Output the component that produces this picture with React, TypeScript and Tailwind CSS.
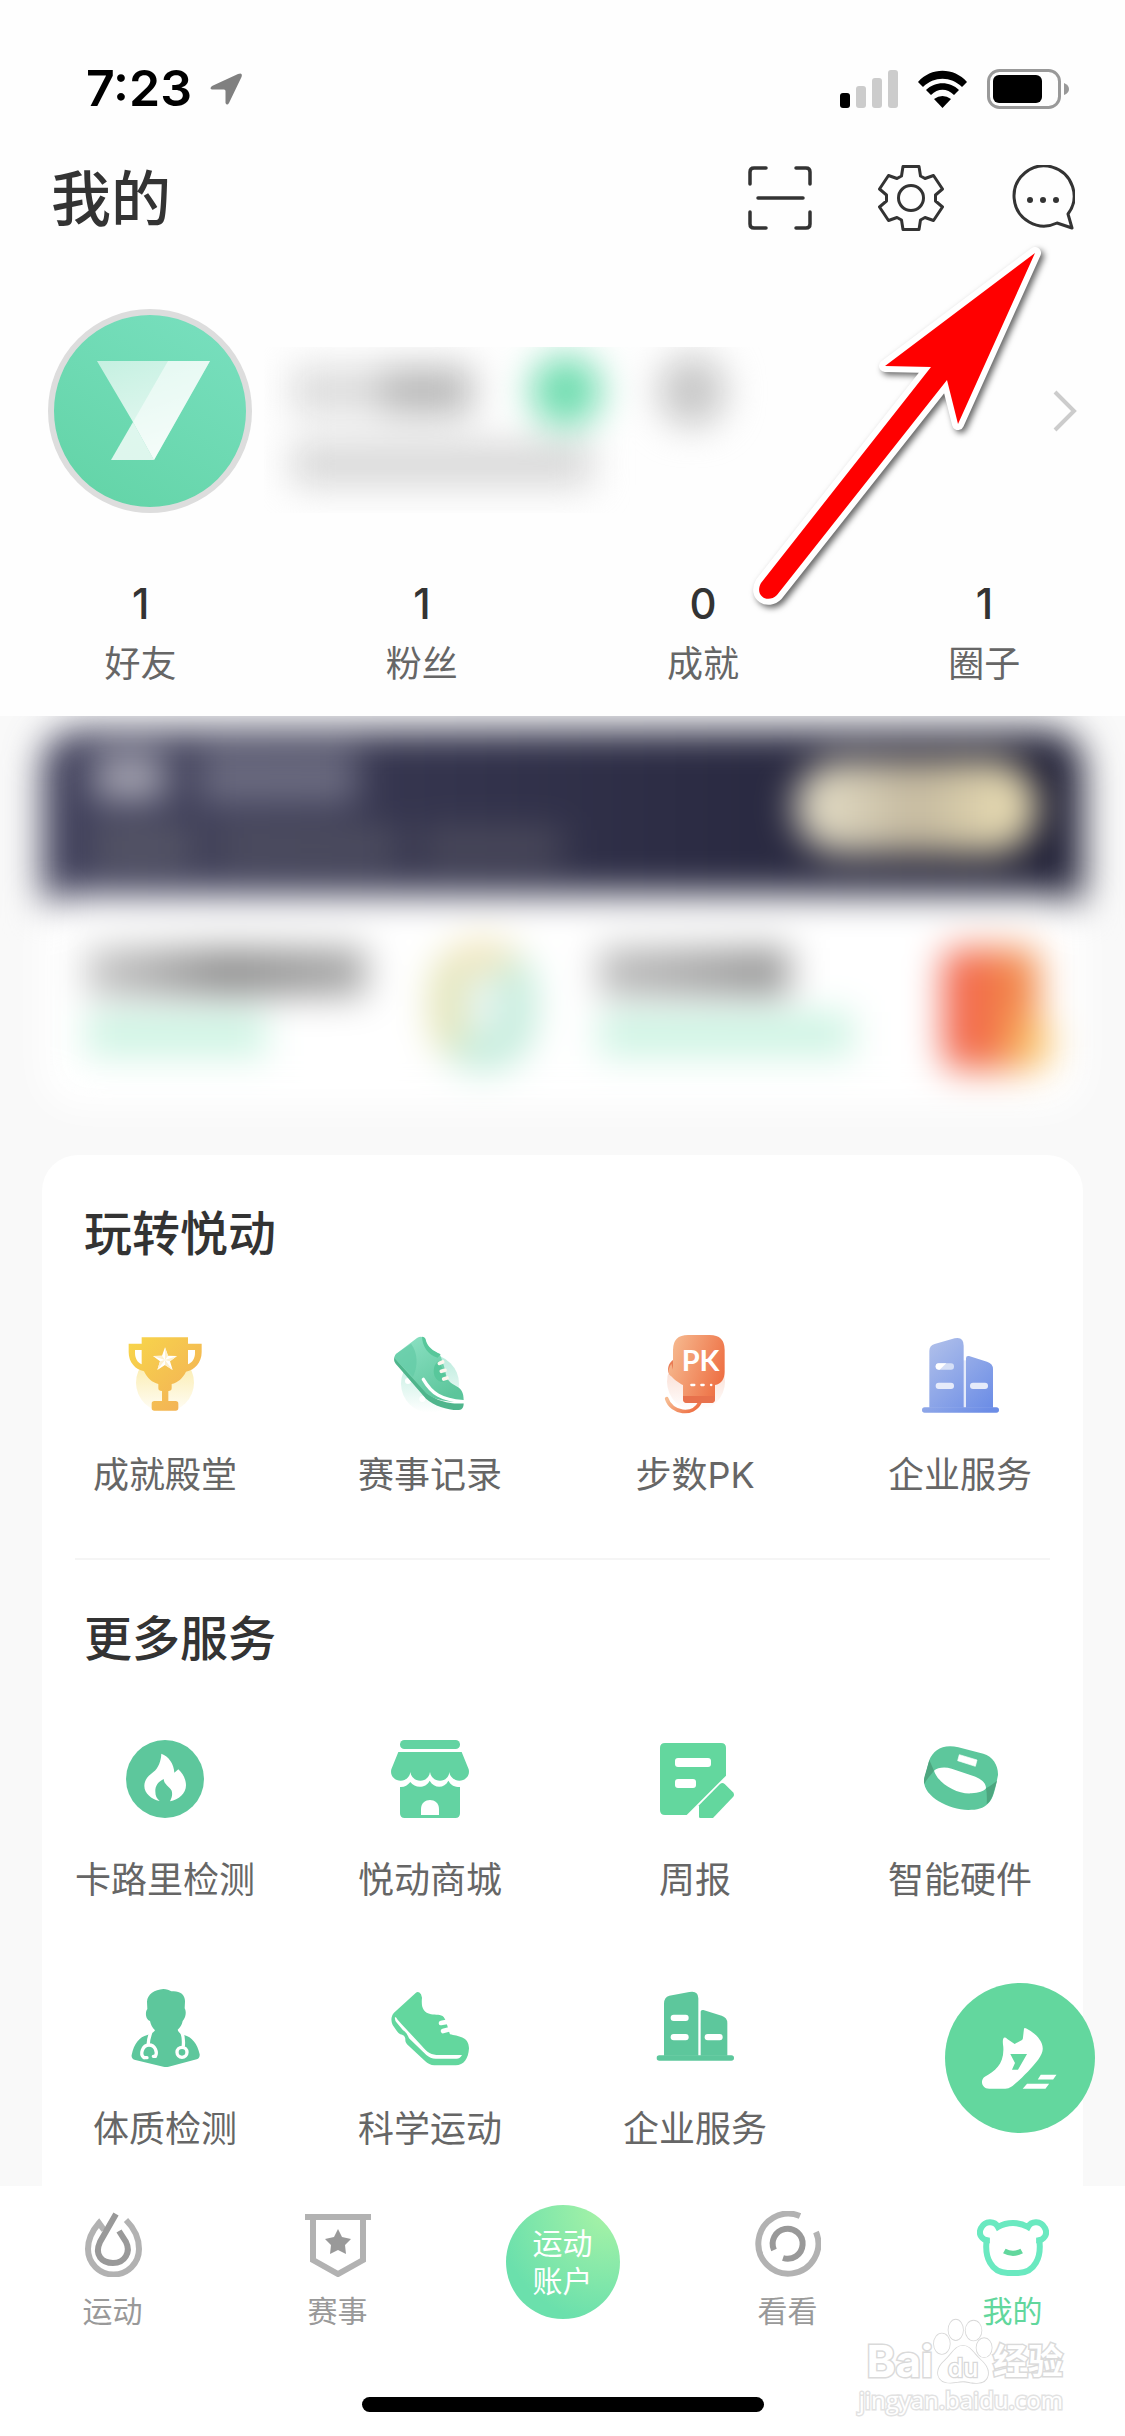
import type { ReactNode } from "react";

type Item = { label: string; icon: ReactNode };

const TrophyIcon = () => (
  <svg viewBox="0 0 234 234" className="size-[78px]">
    <defs>
      <linearGradient id="gold" x1="0" y1="0" x2="1" y2="1">
        <stop offset="0" stopColor="#f8d64a" />
        <stop offset="1" stopColor="#f2ad58" />
      </linearGradient>
      <linearGradient id="goldGlow" x1="0" y1="0" x2="0" y2="1">
        <stop offset="0" stopColor="#fae9a0" />
        <stop offset="1" stopColor="#fffdf6" />
      </linearGradient>
    </defs>
    <circle cx="117" cy="143" r="87" fill="url(#goldGlow)" />
    <path d="M17 36 H47 V98 C30 92 17 72 17 55 Z M217 36 H187 V98 C204 92 217 72 217 55 Z" fill="#fff" />
    <path
      fill="url(#gold)"
      fillRule="evenodd"
      d="M47 7 H186 V26 H227 V52 C227 82 206 106 180 110 C170 130 155 143 137 147 V160 Q137 168 127 168 V198 H149 Q157 198 157 206 V219 Q157 227 149 227 H85 Q77 227 77 219 V206 Q77 198 85 198 H108 V168 Q97 168 97 160 V147 C79 143 64 130 54 109 C28 104 8 82 8 52 V26 H47 Z M27 45 V54 C27 70 35 83 47 88 V45 Z M207 45 H186 V88 C199 83 207 70 207 54 Z"
    />
    <path d="M117 37 L126 62 L153 63 L132 79 L140 105 L117 90 L94 105 L102 79 L81 63 L108 62 Z" fill="#fff" />
    <path d="M117 75 L117 37 L126 62 Z M117 75 L153 63 L132 79 Z M117 75 L140 105 L117 90 Z M117 75 L94 105 L102 79 Z M117 75 L81 63 L108 62 Z" fill="#fdf0cf" />
  </svg>
);

const RunShoeIcon = () => (
  <svg viewBox="0 0 234 234" className="size-[78px]">
    <defs>
      <linearGradient id="mint" x1="0" y1="0" x2="0.7" y2="1">
        <stop offset="0" stopColor="#8fe3c6" />
        <stop offset="1" stopColor="#5cc59b" />
      </linearGradient>
      <linearGradient id="mintGlow" x1="0" y1="0" x2="0" y2="1">
        <stop offset="0" stopColor="#b9ebdc" />
        <stop offset="1" stopColor="#ffffff" />
      </linearGradient>
    </defs>
    <circle cx="117" cy="146" r="87" fill="url(#mintGlow)" />
    <circle cx="51" cy="138" r="9" fill="#fff" />
    <circle cx="94" cy="192" r="9" fill="#fff" />
    <path d="M12 64 L107 174 C140 200 180 208 218 205 C218 217 214 225 204 225 C170 226 130 213 105 191 L14 86 C8 79 8 71 12 64 Z" fill="#4fb58c" />
    <path d="M78 9 Q92 1 103 11 C106 36 124 48 146 57 C152 72 158 88 163 108 C166 130 172 140 190 150 C212 161 218 172 218 196 C190 204 135 200 105 174 L13 72 Q8 63 16 56 Z" fill="url(#mint)" />
    <path d="M60 26 C80 52 82 90 66 126 L13 72 Q8 63 16 56 Z" fill="#63caa5" opacity="0.7" />
    <path d="M93 5 Q102 5 104 14 C110 38 126 46 149 58 L140 68 C112 60 94 34 93 5 Z" fill="#58c79b" />
    <path d="M144 78 C122 88 122 134 150 140 C162 142 168 136 168 132 Z" fill="#58c79b" />
    <path d="M97 133 C122 176 150 194 217 200" fill="none" stroke="#fff" strokeWidth="10" strokeLinecap="round" />
    <path d="M145 85 L155 81 M151 109 L162 106 M158 132 L168 129" stroke="#fdf6ee" strokeWidth="11" strokeLinecap="round" />
  </svg>
);

const GloveIcon = () => (
  <svg viewBox="0 0 234 234" className="size-[78px] overflow-visible">
    <defs>
      <linearGradient id="coral" x1="0" y1="0.2" x2="1" y2="0.6">
        <stop offset="0" stopColor="#f6ba90" />
        <stop offset="1" stopColor="#ee6f43" />
      </linearGradient>
      <linearGradient id="coralGlow" x1="0" y1="0" x2="0" y2="1">
        <stop offset="0.3" stopColor="#fadfd5" />
        <stop offset="1" stopColor="#ffffff" />
      </linearGradient>
    </defs>
    <circle cx="120" cy="140" r="87" fill="url(#coralGlow)" />
    <path d="M32 191 C46 236 112 244 132 202" fill="none" stroke="url(#coral)" strokeWidth="11" strokeLinecap="round" />
    <path d="M55 72 C34 84 32 108 42 120 L60 130 Z" fill="#ea7c55" />
    <path d="M96 0 H161 Q206 0 206 45 V110 C206 132 196 146 177 150 V192 Q177 204 165 204 H93 Q81 204 81 192 V150 C68 145 50 130 40 118 C36 110 38 98 46 86 L51 104 V45 Q51 0 96 0 Z" fill="url(#coral)" />
    <path d="M81 183 H177 V192 Q177 204 165 204 H93 Q81 204 81 192 Z" fill="#e8714c" />
    <path d="M106 150 H115 M136 150 H143 M165 150 H166" stroke="#fff" strokeWidth="7" strokeLinecap="round" />
    <text x="77" y="108" fill="#fff" fontSize="87" className="font-['Lato',sans-serif] font-bold">PK</text>
  </svg>
);

const OfficeBlueIcon = () => (
  <svg viewBox="0 0 234 234" className="size-[78px]">
    <defs>
      <linearGradient id="sky" gradientUnits="userSpaceOnUse" x1="20" y1="20" x2="210" y2="220">
        <stop offset="0" stopColor="#b0c0ea" />
        <stop offset="1" stopColor="#6c8de6" />
      </linearGradient>
    </defs>
    <rect x="126" y="76" width="11" height="142" fill="#e3e9f9" />
    <path d="M25 218 V48 Q25 32 41 27 L101 10 Q128 4 128 32 V218 Z M135 218 V70 Q135 61 144 63 L198 80 Q216 86 216 102 V218 Z" fill="url(#sky)" />
    <rect x="3" y="217" width="231" height="16" rx="8" fill="url(#sky)" />
    <rect x="44" y="85" width="55" height="19" rx="9" fill="#d5dff6" />
    <path d="M53 85 H76 L56 104 H53 Q44 104 44 94 Q44 85 53 85 Z" fill="#fff" />
    <rect x="44" y="143" width="55" height="19" rx="9" fill="#e6ebfa" />
    <rect x="147" y="143" width="54" height="19" rx="9" fill="#e6ebfa" />
  </svg>
);

const FlameIcon = () => (
  <svg viewBox="0 0 234 234" className="size-[78px]">
    <circle cx="117" cy="117" r="117" fill="#5dc79c" />
    <path d="M106 41 C128 48 144 72 145 98 L157 88 C172 102 180 120 180 136 C180 160 158 180 132 184 C138 172 140 164 137 152 C131 140 114 134 113 117 C95 126 88 138 88 154 C88 168 92 176 101 183 C76 178 55 160 55 138 C55 120 66 108 82 96 C98 84 105 62 106 41 Z" fill="#fff" />
  </svg>
);

const ShopIcon = () => (
  <svg viewBox="0 0 234 234" className="size-[78px]" fill="#63d3a2">
    <rect x="27" y="0" width="180" height="27" rx="13" />
    <path d="M22 36 H212 L233 88 C238 108 222 122 205 122 C190 122 176 110 175 96 C174 112 162 122 147 122 C132 122 119 112 117 96 C115 112 103 122 88 122 C73 122 60 112 58 96 C57 110 45 122 29 122 C12 122 -4 108 1 88 Z" />
    <path d="M27 141 C40 142 50 136 58 126 C72 146 104 146 116 122 C130 146 160 146 172 122 C180 136 190 141 207 141 V220 Q207 234 193 234 H41 Q27 234 27 220 Z" />
    <path d="M90 225 V207 C90 171 144 171 144 207 V225 Z" fill="#fff" />
  </svg>
);

const ReportIcon = () => (
  <svg viewBox="0 0 234 234" className="size-[78px]" fill="#63d79e">
    <path d="M27 9 H195 Q210 9 210 24 V107 L92 225 H27 Q12 225 12 210 V24 Q12 9 27 9 Z" />
    <path d="M192 132 Q199 126 206 132 L231 157 Q237 164 231 171 L171 234 H133 Q129 234 129 230 V196 Z" />
    <rect x="57" y="54" width="108" height="27" rx="9" fill="#fff" />
    <rect x="57" y="117" width="63" height="27" rx="9" fill="#fff" />
  </svg>
);

const BandIcon = () => (
  <svg viewBox="0 0 234 234" className="size-[78px]">
    <path
      fill="#5dc79c"
      fillRule="evenodd"
      d="M112 22 L187 41 C216 50 232 76 231 105 L227 125 C222 150 216 176 202 190 C188 206 168 210 142 210 C82 208 8 170 9 122 L25 60 C36 32 66 10 112 22 Z M39 92 C52 132 110 164 152 160 C172 159 190 154 195 145 C196 128 176 114 157 108 L92 86 C72 80 50 82 39 92 Z"
    />
    <path d="M25 60 L39 92 C30 104 18 116 10 132 C8 124 9 118 10 112 Z M228 122 C220 128 208 138 195 145 C198 160 198 176 197 193 C208 184 214 172 218 156 Z" fill="#4da67f" />
    <path d="M115 44 L168 60 L163 79 L110 62 Z" fill="#fff" stroke="#fff" strokeWidth="2" strokeLinejoin="round" />
  </svg>
);

const DoctorIcon = () => (
  <svg viewBox="0 0 234 234" className="size-[78px]">
    <path
      fill="#5dc79c"
      d="M112 0 C122 0 130 3 136 7 C160 4 178 16 177 38 L176 58 C181 66 181 84 170 96 C168 108 162 116 155 122 C158 130 162 134 174 138 C198 144 214 164 221 196 Q222 208 212 211 L128 233 Q120 235 112 233 L28 213 Q15 209 17 198 C24 164 40 144 64 138 C76 134 84 130 87 124 C79 116 74 106 72 96 C58 92 57 68 64 60 L63 38 C64 16 86 2 112 0 Z"
    />
    <g fill="none" stroke="#fff" strokeWidth="10" strokeLinecap="round">
      <path d="M76 124 C72 140 66 150 67 166 M166 128 C174 142 173 156 172 170" />
      <path d="M54 206 C40 196 50 168 69 168 C88 168 95 190 88 202 L82 202 M54 206 L63 206" />
      <circle cx="168" cy="190" r="15" />
    </g>
  </svg>
);

const SneakerIcon = () => (
  <svg viewBox="0 0 234 234" className="size-[78px]">
    <path
      fill="#63d79e"
      d="M74 12 Q82 4 90 16 L93 26 C90 54 96 70 120 76 C134 78 150 76 158 84 C166 94 170 116 177 136 C200 142 234 142 234 178 C232 210 218 229 194 229 H130 Q114 228 102 216 L48 166 Q42 160 43 150 C42 140 36 138 28 136 Q22 132 18 127 L5 108 C-1 96 0 80 9 71 Z"
    />
    <path d="M12 84 Q16 84 20 92 L34 108 L92 170 C108 190 122 198 144 198 H213 Q208 209 196 209 H134 Q118 209 106 198 L54 148 C50 138 46 130 36 124 L18 102 Q10 94 12 84 Z" fill="#fff" />
    <path d="M150 102 L172 98 M156 126 L176 121" stroke="#fff" strokeWidth="14" strokeLinecap="round" />
  </svg>
);

const OfficeGreenIcon = () => (
  <svg viewBox="0 0 234 234" className="size-[78px]" fill="#5dc79c">
    <path d="M24 200 V44 Q24 24 40 20 L100 9 Q127 4 127 28 V200 Z" />
    <path d="M134 200 V68 Q134 62 142 63 L197 80 Q214 86 214 102 V200 Z" />
    <rect x="2" y="199" width="232" height="16" rx="8" />
    <g fill="#fff">
      <rect x="44" y="77" width="54" height="19" rx="9" />
      <rect x="44" y="135" width="54" height="19" rx="9" />
      <rect x="146" y="135" width="54" height="19" rx="9" />
    </g>
  </svg>
);

const stats = [
  { value: 1, label: "好友" },
  { value: 1, label: "粉丝" },
  { value: 0, label: "成就" },
  { value: 1, label: "圈子" },
];

const playItems: Item[] = [
  { label: "成就殿堂", icon: <TrophyIcon /> },
  { label: "赛事记录", icon: <RunShoeIcon /> },
  { label: "步数PK", icon: <GloveIcon /> },
  { label: "企业服务", icon: <OfficeBlueIcon /> },
];

const moreItems: Item[] = [
  { label: "卡路里检测", icon: <FlameIcon /> },
  { label: "悦动商城", icon: <ShopIcon /> },
  { label: "周报", icon: <ReportIcon /> },
  { label: "智能硬件", icon: <BandIcon /> },
  { label: "体质检测", icon: <DoctorIcon /> },
  { label: "科学运动", icon: <SneakerIcon /> },
  { label: "企业服务", icon: <OfficeGreenIcon /> },
];

function StatusBar() {
  return (
    <div className="flex items-center justify-between pt-[63px] pr-[56px] pl-[86px]">
      <div className="flex items-center gap-[18px]">
        <span className="text-[50px] leading-[51px] font-semibold text-black">7:23</span>
        <svg viewBox="0 0 32 32" className="size-8" fill="#808080">
          <path d="M28 1 Q33 -1 31.500 4 L19 30 Q17 33 15.500 30 V18 Q15.500 16.500 14 16.500 H2 Q-1 15.500 2 13 Z" />
        </svg>
      </div>
      <div className="flex items-center gap-[19px]">
        <svg viewBox="0 0 58 38" className="h-[38px] w-[58px]">
          <rect x="0" y="23" width="10" height="15" rx="3" />
          <rect x="16" y="16" width="10" height="22" rx="3" fill="#ccc" />
          <rect x="32" y="8" width="10" height="30" rx="3" fill="#ccc" />
          <rect x="48" y="0" width="10" height="38" rx="3" fill="#ccc" />
        </svg>
        <svg viewBox="0 0 51 38" className="h-[38px] w-[51px]">
          <path d="M1 12 C14 -3 37 -3 50 12 L45 17 C34 6 17 6 6 17 Z" />
          <path d="M9 20 C18 11 33 11 42 20 L37 25 C30 18 21 18 14 25 Z" />
          <path d="M17 29 Q25.500 23 34 29 L25.500 38 Z" />
        </svg>
        <svg viewBox="0 0 82 40" className="h-10 w-[82px]">
          <rect x="1.500" y="1.500" width="71" height="37" rx="11" fill="none" stroke="#999" strokeWidth="3" />
          <rect x="6" y="6" width="49" height="28" rx="6" />
          <path d="M77 14 Q82 16 82 20 Q82 24 77 26 Z" fill="#999" />
        </svg>
      </div>
    </div>
  );
}

function Header() {
  return (
    <header className="mt-[51px] flex items-center justify-between pr-[50px] pl-[51px]">
      <h1 className="pt-0.5 text-[60px] leading-[64px] font-medium text-[#333]">我的</h1>
      <div className="flex gap-[65px]">
        <button aria-label="扫一扫">
          <svg viewBox="0 0 66 66" className="size-[66px]" fill="none" stroke="#333" strokeWidth="3.500" strokeLinecap="round">
            <path d="M3 19 V7 Q3 3 7 3 H19 M49 3 H59 Q63 3 63 7 V19 M63 47 V59 Q63 63 59 63 H49 M19 63 H7 Q3 63 3 59 V47" />
            <path d="M11 33 H56" />
          </svg>
        </button>
        <button aria-label="设置">
          <svg viewBox="-33 -33 66 66" className="size-[66px]" fill="none" stroke="#333" strokeWidth="3" strokeLinejoin="round">
            <path d="M-9.500 -22 L-8 -31.500 H8 L9.500 -22 L14 -19.500 L22.500 -22.500 L31.500 -9 L24.500 -3 V3 L31.500 9 L22.500 22.500 L14 19.500 L9.500 22 L8 31.500 H-8 L-9.500 22 L-14 19.500 L-22.500 22.500 L-31.500 9 L-24.500 3 V-3 L-31.500 -9 L-22.500 -22.500 L-14 -19.500 Z" />
            <circle r="12.500" />
          </svg>
        </button>
        <button aria-label="消息">
          <svg viewBox="0 0 66 66" className="size-[66px]" fill="none" stroke="#333" strokeWidth="3" strokeLinejoin="round">
            <path d="M48 58 A30 30 0 1 1 59 49 L63 63 Z" />
            <g fill="#333" stroke="none">
              <circle cx="21" cy="35" r="3" />
              <circle cx="34" cy="35" r="3" />
              <circle cx="47" cy="35" r="3" />
            </g>
          </svg>
        </button>
      </div>
    </header>
  );
}

function Profile() {
  return (
    <section className="mt-[78px] flex h-[204px] items-center px-[48px]">
      <svg viewBox="0 0 204 204" className="size-[204px] shrink-0">
        <defs>
          <linearGradient id="avatar" x1="0.2" y1="1" x2="0.8" y2="0">
            <stop offset="0" stopColor="#63d4a7" />
            <stop offset="1" stopColor="#78dfbe" />
          </linearGradient>
          <linearGradient id="fold" x1="0" y1="0" x2="0.3" y2="1">
            <stop offset="0" stopColor="#fff" stopOpacity="0.6" />
            <stop offset="1" stopColor="#fff" stopOpacity="0.85" />
          </linearGradient>
        </defs>
        <circle cx="102" cy="102" r="99" fill="url(#avatar)" stroke="#ddd" strokeWidth="6" />
        <path d="M49 52 H162 L106 151 L85 113 Z" fill="url(#fold)" />
        <path d="M120 52 H162 L106 151 L85 113 Z" fill="#fff" opacity="0.5" />
        <path d="M85 113 L106 151 H63 Z" fill="#fff" opacity="0.78" />
      </svg>
      <div className="ml-3 h-[166px] flex-1 self-end overflow-hidden">
        <div className="px-7 pt-[8px] blur-[18px]">
          <div className="flex items-center">
            <div className="h-12 w-[90px] bg-[#dcdcdc]" />
            <div className="h-12 w-[90px] bg-[#b8b8b8]" />
            <div className="ml-[58px] h-[72px] w-[72px] rounded-full bg-[#70ddb0]" />
            <div className="ml-[56px] h-[72px] w-[68px] rounded-full bg-[#c8c8c8]" />
          </div>
          <div className="mt-[16px] h-[42px] w-[300px] bg-[#d6d6d6]" />
        </div>
      </div>
      <svg viewBox="0 0 24 42" className="h-[42px] w-6" fill="none" stroke="#ccc" strokeWidth="4">
        <path d="M2 2 L21 21 L2 40" />
      </svg>
    </section>
  );
}

function Stats() {
  return (
    <dl className="mt-[70px] grid grid-cols-4 pb-[34px] text-center">
      {stats.map((s) => (
        <div key={s.label} className="flex flex-col-reverse gap-[21px]">
          <dt className="text-[36px] leading-[36px] text-[#666]">{s.label}</dt>
          <dd className="text-[42px] leading-[42px] font-medium text-[#333]">{s.value}</dd>
        </div>
      ))}
    </dl>
  );
}

// Membership banner and wallet cards, kept blurred for privacy
function BlurredCards() {
  return (
    <section aria-hidden="true" className="h-[439px] overflow-hidden">
      <div className="px-[42px] pt-[14px] blur-[18px]">
        <div className="flex h-[170px] items-center justify-between rounded-t-[36px] bg-linear-to-r from-[#41415c] to-[#202036] pr-[46px] pb-4 pl-[52px]">
          <div>
            <div className="flex items-center gap-8">
              <div className="h-12 w-[72px] bg-[#a3a2b0]" />
              <div className="h-14 w-[160px] bg-[#6b6b80]" />
            </div>
            <div className="mt-6 flex gap-6">
              <div className="h-9 w-[100px] bg-[#5a5a69]" />
              <div className="h-9 w-[180px] bg-[#515162]" />
              <div className="h-9 w-[140px] bg-[#4c4b5c]" />
            </div>
          </div>
          <div className="h-[94px] w-[242px] rounded-full bg-linear-to-r from-[#e8e2cc] via-[#c4b99f] to-[#f0e3b6]" />
        </div>
        <div className="-mt-[6px] grid h-[214px] grid-cols-2 rounded-[36px] bg-white px-[44px] pt-[54px]">
          <div className="flex justify-between pr-[28px]">
            <div>
              <div className="h-12 w-[280px] bg-linear-to-r from-[#cacaca] via-[#8d8d8d] to-[#a8a8a8]" />
              <div className="mt-4 h-11 w-[180px] bg-[#cdf4e3]" />
            </div>
            <div className="-mt-2 h-[130px] w-[104px] rounded-[50px] border-[30px] border-[#bfebd9] border-t-[#f0e4b8] border-l-[#e2e2b0] bg-[#e6f5f0]" />
          </div>
          <div className="flex justify-between pl-[36px]">
            <div>
              <div className="h-12 w-[190px] bg-linear-to-r from-[#bdbdbd] to-[#929292]" />
              <div className="mt-4 h-11 w-[254px] bg-[#cdf4e3]" />
            </div>
            <div className="flex h-[122px] w-[96px] items-end justify-end rounded-2xl bg-linear-to-r from-[#f25a4c] to-[#f19348]">
              <div className="h-[52px] w-[40px] translate-x-3 rounded-full bg-[#f9c268]" />
            </div>
          </div>
        </div>
      </div>
    </section>
  );
}

function ServiceGroup({ title, items }: { title: string; items: Item[] }) {
  return (
    <section className="pt-[55px] pb-[65px]">
      <h2 className="px-[42px] text-[48px] leading-[48px] font-medium text-[#333]">{title}</h2>
      <div className="mt-[77px] grid grid-cols-4 gap-x-[75px] gap-y-[91px] px-7">
        {items.map((item) => (
          <button key={item.label} className="flex flex-col items-center gap-[44px]">
            {item.icon}
            <span className="text-[36px] leading-[36px] whitespace-nowrap text-[#666]">{item.label}</span>
          </button>
        ))}
      </div>
    </section>
  );
}

function TabBar() {
  return (
    <nav className="grid h-[211px] grid-cols-5 bg-white pt-[25px] text-center text-[30px] leading-[30px] text-[#999]">
      <a href="#" className="flex flex-col items-center gap-[19px]">
        <svg viewBox="0 0 66 66" className="size-[66px]" fill="none" strokeWidth="6">
          <path d="M24 19 L19 12 C12 20 8 29 8 38 A25 25 0 0 0 59 38 C59 28 54 17 46 9" stroke="#b2b2b2" />
          <path d="M36 3 L20 31 C14 44 22 52 33 52 C45 52 51 41 46 31 L39 20" stroke="#999" />
        </svg>
        运动
      </a>
      <a href="#" className="flex flex-col items-center gap-[19px]">
        <svg viewBox="0 0 66 66" className="size-[66px]" fill="none" strokeWidth="6" stroke="#b2b2b2">
          <path d="M0 6 H66 M8 6 V49 L33 63 L58 49 V6" />
          <path d="M33 18 L37 26 L46 28 L40 34 L41 43 L33 39 L25 43 L26 34 L20 28 L29 26 Z" fill="#999" stroke="none" />
        </svg>
        赛事
      </a>
      <a href="#" className="-mt-1.5 flex size-[114px] flex-col items-center justify-center justify-self-center rounded-full bg-[radial-gradient(circle_at_90%_5%,#a8f3a6,#6be0ac_75%)] text-[30px] leading-[38px] text-white">
        <span>运动</span>
        <span>账户</span>
      </a>
      <a href="#" className="flex flex-col items-center gap-[19px]">
        <svg viewBox="0 0 66 66" className="size-[66px]" fill="none" strokeWidth="6">
          <path d="M45 5 A30 30 0 1 0 61 21" stroke="#b2b2b2" />
          <path d="M19 39 A15 15 0 1 1 28 47" stroke="#999" />
        </svg>
        看看
      </a>
      <a href="#" className="flex flex-col items-center gap-[19px] text-[#62d79d]">
        <svg viewBox="0 0 216 198" className="h-[66px] w-[72px]" fill="none" strokeWidth="18">
          <path d="M38 88 C14 90 2 68 13 50 C24 30 52 28 63 48 C90 32 126 32 153 48 C164 28 192 30 203 50 C214 68 202 90 178 88" stroke="#6ae9c0" />
          <path d="M30 80 C20 140 44 186 92 186 H124 C172 186 196 140 186 80" stroke="#6ae9c0" />
          <path d="M82 120 Q108 134 134 120" stroke="#62d79d" strokeWidth="16" />
        </svg>
        我的
      </a>
    </nav>
  );
}

function Watermark() {
  return (
    <div className="pointer-events-none absolute right-[62px] bottom-[20px] flex flex-col items-end text-white">
      <div className="flex items-end font-bold [-webkit-text-stroke:3px_#dadada] [paint-order:stroke_fill]">
        <span className="text-[44px] leading-[46px]">Bai</span>
        <svg viewBox="0 0 180 200" className="h-[66px] w-[60px]" fill="#fff" stroke="#d8d8d8" strokeWidth="5">
          <ellipse cx="26" cy="78" rx="24" ry="31" />
          <ellipse cx="68" cy="36" rx="22" ry="31" />
          <ellipse cx="122" cy="38" rx="24" ry="30" />
          <ellipse cx="154" cy="90" rx="23" ry="29" />
          <path d="M90 84 C112 84 122 108 142 126 C180 158 170 198 130 197 C112 197 104 192 90 192 C76 192 68 196 52 196 C10 196 2 158 34 130 C58 108 66 84 90 84 Z" />
          <text x="90" y="178" textAnchor="middle" fontSize="76" strokeWidth="8" className="font-medium">du</text>
        </svg>
        <span className="text-[35px] leading-[46px]">经验</span>
      </div>
      <span className="text-[24px] leading-[32px] font-['Open_Sans',sans-serif] font-medium [-webkit-text-stroke:3px_#e2e2e2] [paint-order:stroke_fill]">
        jingyan.baidu.com
      </span>
    </div>
  );
}

export default function App() {
  return (
    <div className="relative flex min-h-screen flex-col bg-[#f9f9f9] font-['Inter','Noto_Sans_CJK_SC',sans-serif]">
      <div className="bg-[#fefefe]">
        <StatusBar />
        <Header />
        <Profile />
        <Stats />
      </div>

      <BlurredCards />

      <main className="mx-[42px] flex-1 rounded-t-[36px] bg-white">
        <ServiceGroup title="玩转悦动" items={playItems} />
        <hr className="mx-[33px] border-t-2 border-[#f5f5f5]" />
        <div className="-mb-[26px]">
          <ServiceGroup title="更多服务" items={moreItems} />
        </div>
      </main>

      <footer className="bg-white pb-6">
        <TabBar />
        <div className="mx-auto h-[15px] w-[402px] rounded-full bg-black" />
      </footer>

      {/* Start-run shortcut */}
      <button aria-label="开始运动" className="absolute right-[30px] bottom-[303px] size-[150px]">
        <svg viewBox="0 0 448 448" className="size-full">
          <circle cx="224" cy="224" r="224" fill="#63d79e" />
          <path d="M236 136 Q238 133 243 136 C270 150 292 172 292 196 C292 216 270 240 248 264 C230 282 212 300 198 310 Q190 316 180 316 H132 C108 316 104 288 120 279 C150 264 178 240 174 190 Q170 164 178 163 Q182 163 186 167 L208 182 L230 170 Q233 168 233 162 Z" fill="#fff" />
          <path d="M195 212 H245 L218 259 H200 L209 239 Z" fill="#63d79e" />
          <path d="M286 274 H333 L323 288 H277 Z M245 301 H311 L300 316 H232 Z" fill="#fff" />
        </svg>
      </button>

      <Watermark />

      {/* Pointer to the message button */}
      <svg viewBox="0 0 300 380" className="pointer-events-none absolute top-[240px] right-[75px] h-[380px] w-[300px] drop-shadow-[3px_3px_3px_rgba(0,0,0,0.6)]">
        <path
          d="M285 13 L135 126 L181 127 L11 343 C4 356 18 364 27 355 L197 140 L208 184 Z"
          fill="#f00"
          stroke="#fff"
          strokeWidth="12"
          strokeLinejoin="round"
          paintOrder="stroke"
        />
      </svg>
    </div>
  );
}
